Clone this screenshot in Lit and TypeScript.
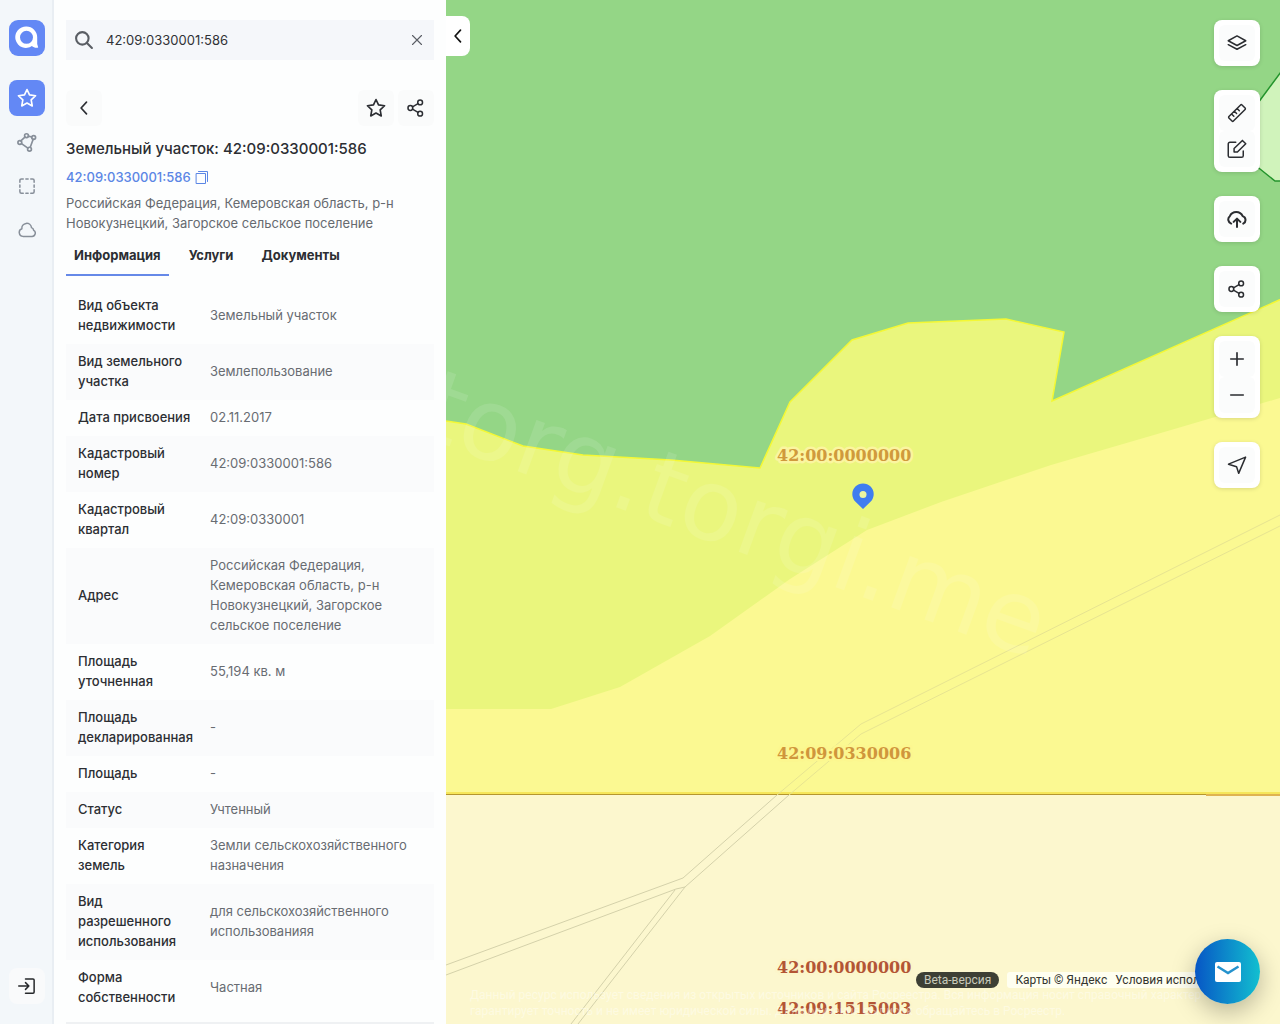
import { LitElement, html, css, svg } from "lit";
import { customElement, state } from "lit/decorators.js";
import { classMap } from "lit/directives/class-map.js";

const icon = (body: unknown, size = 20, box = 24) =>
  html`<svg width=${size} height=${size} viewBox="0 0 ${box} ${box}" fill="none" stroke="currentColor" stroke-width="2" stroke-linecap="round" stroke-linejoin="round" aria-hidden="true">${body}</svg>`;

const star = svg`<path d="M12 1.800l3 6.500 7.300 1-5.300 5 1.300 7.200-6.300-3.500-6.300 3.500 1.300-7.200-5.300-5 7.300-1z"/>`;
const share = svg`<circle cx="17.500" cy="4.500" r="3.200"/><circle cx="4.500" cy="12" r="3.200"/><circle cx="17.500" cy="19.500" r="3.200"/><path d="M7.300 13.600l7.400 4.300M14.700 6.100l-7.400 4.300"/>`;
const chevron = svg`<path d="M15 5L8.500 12l6.500 7"/>`;
const network = svg`<path d="M4.600 10.600l4.900-4.400M13.600 5l4.100 1M19.400 8.800l-3.500 9.600M5.400 13.900l7.700 5.400"/><circle cx="3.400" cy="12.600" r="2.300"/><circle cx="11.400" cy="4.400" r="2.300"/><circle cx="20" cy="6.600" r="2.300"/><circle cx="15" cy="20.600" r="2.300"/>`;
const dashed = svg`<path d="M2.500 7V4.500a2 2 0 0 1 2-2H7M10.500 2.500h3M17 2.500h2.500a2 2 0 0 1 2 2V7M21.500 10.500v3M21.500 17v2.500a2 2 0 0 1-2 2H17M13.500 21.500h-3M7 21.500H4.500a2 2 0 0 1-2-2V17M2.500 13.500v-3"/>`;
const cloud = svg`<path d="M6.500 20.500h12a4.300 4.300 0 0 0 2.400-8 4.500 4.500 0 0 0-2.900-3.700A6.300 6.300 0 0 0 5.200 10.400a5.200 5.200 0 0 0 1.300 10.100z"/>`;
const login = svg`<path d="M10 2.500h10a1.500 1.500 0 0 1 1.500 1.500v16a1.500 1.500 0 0 1-1.500 1.500H10M1 12h13.500M10 7.500l4.500 4.500-4.500 4.500"/>`;
const layers = svg`<path d="M12 3.500L1.500 9.300 12 15l10.500-5.700zM1.500 14L12 19.500 22.500 14" stroke-width="1.800"/>`;
const ruler = svg`<path d="M16.300 2.300a1.200 1.200 0 0 1 1.700 0l3.700 3.700a1.200 1.200 0 0 1 0 1.700L7.700 21.700a1.200 1.200 0 0 1-1.700 0L2.300 18a1.200 1.200 0 0 1 0-1.700zM5.500 13.200l2.700 2.700M8.800 9.900l2.700 2.700M12.100 6.600l2.700 2.700" stroke-width="1.800"/>`;
const edit = svg`<path d="M10.500 4H3.500a2 2 0 0 0-2 2v14a2 2 0 0 0 2 2h14a2 2 0 0 0 2-2v-5.500M8.500 11.500L18.500 1.700l4 4-10 10h-4z" stroke-width="1.800"/>`;
const upload = svg`<path d="M5 17.500A5.200 5.200 0 0 1 3.400 8.600 8.500 8.500 0 0 1 18.800 8.600 4.800 4.800 0 0 1 19.500 17.500M12 21.500v-9.500M8 15.500l4-4 4 4" stroke-width="2.400"/>`;
const plane = svg`<path d="M22.300 2.500L1.800 11l9.700 3L14 22z" stroke-width="1.800"/>`;

const rows: [string, string][] = [
  ["Вид объекта недвижимости", "Земельный участок"],
  ["Вид земельного участка", "Землепользование"],
  ["Дата присвоения", "02.11.2017"],
  ["Кадастровый номер", "42:09:0330001:586"],
  ["Кадастровый квартал", "42:09:0330001"],
  ["Адрес", "Российская Федерация, Кемеровская область, р-н Новокузнецкий, Загорское сельское поселение"],
  ["Площадь уточненная", "55,194 кв. м"],
  ["Площадь декларированная", "-"],
  ["Площадь", "-"],
  ["Статус", "Учтенный"],
  ["Категория земель", "Земли сельскохозяйственного назначения"],
  ["Вид разрешенного использования", "для сельскохозяйственного использованияя"],
  ["Форма собственности", "Частная"],
];

@customElement("nav-rail")
class NavRail extends LitElement {
  static styles = css`
    :host { display: flex; flex-direction: column; align-items: center; box-sizing: border-box; padding: 20px 0; background: #f3f7fa; box-shadow: inset -2px 0 #e9eef3; }
    .logo { display: grid; place-items: center; width: 36px; height: 36px; margin-bottom: 24px; border-radius: 9px; background: #6388f5; }
    nav { display: flex; flex-direction: column; gap: 8px; }
    button { display: grid; place-items: center; width: 36px; height: 36px; padding: 0; border: 0; border-radius: 8px; background: none; color: #878f99; }
    button.active { background: #6388f5; color: #fff; }
    .login { margin-top: auto; background: #f9fafb; color: #26282b; }
  `;
  render() {
    return html`
      <a class="logo" href="#" aria-label="Главная"><svg width="24" height="24" viewBox="0 0 24 24" aria-hidden="true"><path d="M11.500 0.500a10.700 10.700 0 0 1 10.700 10.700V18l1 3.600c-2.200.6-4.500.1-6.300-1.500A10.700 10.700 0 1 1 11.500.5zm0 4.300a6.500 6.500 0 1 0 0 13 6.500 6.500 0 0 0 0-13z" fill="#fff" fill-rule="evenodd"/></svg></a>
      <nav>
        <button class="active" aria-label="Избранное">${icon(star)}</button>
        <button aria-label="Полигоны">${icon(network)}</button>
        <button aria-label="Выделение">${icon(dashed, 18)}</button>
        <button aria-label="Облако">${icon(cloud, 18)}</button>
      </nav>
      <button class="login" aria-label="Войти">${icon(login, 18)}</button>
    `;
  }
}

@customElement("info-panel")
class InfoPanel extends LitElement {
  @state() private tab = 0;
  static styles = css`
    :host { display: flex; flex-direction: column; box-sizing: border-box; padding: 20px 12px 0; background: #fdfefe; color: #2c2e33; overflow: hidden; }
    .search { display: flex; align-items: center; gap: 12px; height: 40px; padding: 0 8px; background: #f5f7fa; color: #5a5e64; flex: none; }
    input { flex: 1; min-width: 0; border: 0; padding: 0; background: none; font: inherit; color: #303236; outline: 0; }
    button { padding: 0; border: 0; background: none; color: inherit; font: inherit; }
    .clear { display: grid; width: 18px; }
    .actions { display: flex; gap: 4px; margin: 30px 0 12px; }
    .square { display: grid; place-items: center; width: 36px; height: 36px; border-radius: 6px; background: #fafbfb; }
    .square:first-child { margin-right: auto; }
    h1 { margin: 0; font-size: 15px; line-height: 22px; font-weight: 500; }
    .number { display: flex; align-items: center; gap: 4px; margin-top: 7px; line-height: 20px; color: #5b86e5; font-weight: 500; }
    a { color: inherit; text-decoration: none; }
    .copy { display: grid; }
    .address { margin: 6px 0 12px; line-height: 20px; color: #666a70; }
    .tabs { display: flex; gap: 12px; margin-bottom: 12px; }
    .tab { padding: 0 8px 9px; line-height: 20px; font-weight: 700; border-bottom: 2px solid transparent; }
    .tab.on { border-color: #6689e8; }
    table { border-collapse: collapse; table-layout: fixed; width: 100%; }
    th, td { box-sizing: border-box; padding: 7px 12px 9px; line-height: 20px; text-align: left; }
    th { width: 132px; padding-right: 4px; font-weight: 500; }
    td { color: #686c72; }
    tr:nth-child(even) { background: #fafbfc; }
    .rule { width: 100%; margin: 6px 0 0; border: 0; border-top: 2px solid #eff1f3; }
  `;
  render() {
    return html`
      <div class="search">
        ${icon(svg`<circle cx="10" cy="10" r="7.500" stroke-width="2.500"/><path d="M15.500 15.500L21.500 21.500" stroke-width="2.500"/>`)}
        <input aria-label="Поиск" .value=${"42:09:0330001:586"} />
        <button class="clear" aria-label="Очистить">${icon(svg`<path d="M6 6l12 12M18 6L6 18" stroke-width="1.500"/>`, 18)}</button>
      </div>
      <div class="actions">
        <button class="square" aria-label="Назад">${icon(chevron)}</button>
        <button class="square" aria-label="В избранное">${icon(star)}</button>
        <button class="square" aria-label="Поделиться">${icon(share, 18)}</button>
      </div>
      <h1>Земельный участок: 42:09:0330001:586</h1>
      <div class="number"><a href="#">42:09:0330001:586</a>
        <button class="copy" aria-label="Скопировать">${icon(svg`<path d="M1.500 4.500h9v10h-9zM3.500 2.500h9v10" stroke-width="1"/>`, 16, 16)}</button>
      </div>
      <p class="address">Российская Федерация, Кемеровская область, р-н Новокузнецкий, Загорское сельское поселение</p>
      <div class="tabs" role="tablist">
        ${["Информация", "Услуги", "Документы"].map((name, i) => html`<button role="tab" aria-selected=${this.tab === i} class=${classMap({ tab: true, on: this.tab === i })} @click=${() => (this.tab = i)}>${name}</button>`)}
      </div>
      <table><tbody>${rows.map(([k, v]) => html`<tr><th scope="row">${k}</th><td>${v}</td></tr>`)}</tbody></table>
      <hr class="rule" />
    `;
  }
}

@customElement("land-map")
class LandMap extends LitElement {
  static styles = css`
    :host { display: block; position: relative; overflow: hidden; }
    .canvas { position: absolute; inset: 0; width: 100%; height: 100%; }
    .mark { font: 100px "DejaVu Sans", sans-serif; fill: #fff; fill-opacity: 0.11; }
    .label { font: 700 16px "DejaVu Serif", serif; stroke-width: 5px; stroke-linejoin: round; paint-order: stroke; }
    .upper { fill: #d09a3c; stroke: #fbf5a0; }
    .middle { fill: #d0963c; stroke: #fcf78f; }
    .lower { fill: #b35535; stroke: #fcf6ca; }
    .note { font: 12px Roboto, "Noto Sans", sans-serif; fill: #fff; fill-opacity: 0.42; }
    .collapse { position: absolute; left: 0; top: 16px; display: grid; place-items: center; width: 24px; height: 40px; padding: 0; border: 0; border-radius: 0 8px 8px 0; background: #fff; color: #111; }
    .tools { position: absolute; right: 20px; top: 20px; display: flex; flex-direction: column; gap: 24px; }
    .group { display: flex; flex-direction: column; padding: 5px; border-radius: 8px; background: #fff; box-shadow: 0 1px 4px #0002; }
    .group button { display: grid; place-items: center; width: 36px; height: 36px; padding: 0; border: 0; border-radius: 6px; background: #fbfcfc; color: #2b2d31; }
    .legal { position: absolute; left: 470px; right: 36px; bottom: 36px; display: flex; gap: 8px; font: 12px Roboto, "Noto Sans", sans-serif; line-height: 16px; white-space: nowrap; }
    .beta { padding: 0 8px; border-radius: 8px; background: #3d3f34; color: #c8cabb; }
    .terms { display: flex; gap: 8px; flex: 1; padding: 0 8px; border-radius: 3px; background: #fffff0; overflow: hidden; }
    .terms a { color: #34352f; text-decoration: none; }
    .mail { position: absolute; right: 20px; bottom: 20px; display: grid; place-items: center; width: 65px; height: 65px; padding: 0; border: 0; border-radius: 50%; background: linear-gradient(90deg, #0756c5, #12bfd0); box-shadow: 0 8px 24px #0004; }
  `;
  render() {
    return html`
      <svg class="canvas" viewBox="446 0 834 1024" preserveAspectRatio="xMinYMin slice" role="img" aria-label="Карта участков">
        <rect x="446" width="834" height="1024" fill="#94d686"/>
        <path d="M1281 72l-26 35v58l20 16h6z" fill="#d0f3bb" stroke="#23942c" stroke-width="1.500"/>
        <path d="M440 420l26 4 57 22 60 9 88 5 89 8 30-66 62-62 56-17 98-4 58 13-12 69 234-104v500H440z" fill="#eaf67d" stroke="#f4f834" stroke-width="1.500"/>
        <path d="M446 709h105l69-22 90-51 80-57 77-49 74-28 110-37 120-35 109-32v397H446z" fill="#fbf992"/>
        <path d="M446 795h834v229H446z" fill="#fcf7ce"/>
        <path d="M446 793.500h834" stroke="#f6e65a" stroke-width="3"/>
        <path d="M446 794.500h834" stroke="#b4962f" stroke-width="1"/>
        <path d="M1206 795h74" stroke="#dfb350" stroke-width="2"/>
        <g fill="none" stroke-width="1">
          <path d="M1280 515L861 724l-84 71M1280 526L861 734l-72 61" stroke="#e7e491"/>
          <path d="M777 795l-94 83-237 87M789 795l-104 92-9 2-230 86M685 887L578 1024M675 890L571 1024" stroke="#d4d1aa"/>
        </g>
        <text class="mark" x="415" y="434" transform="rotate(20 415 434)">torg.torgi.me</text>
        <text class="label upper" x="777" y="461">42:00:0000000</text>
        <text class="label middle" x="777" y="759">42:09:0330006</text>
        <text class="label lower" x="777" y="973">42:00:0000000</text>
        <text class="label lower" x="777" y="1014">42:09:1515003</text>
        <text class="note" x="470" y="999">Данный ресурс использует сведения из открытых источников и сайта Росреестра. Вся информация носит справочный характер</text>
        <text class="note" x="470" y="1015">гарантирует точность и не имеет юридической силы. Для получения выписок обращайтесь в Росреестр.</text>
        <path d="M863 509l-7.500-7.200a10.700 10.700 0 1 1 15 0z" fill="#3f7df0"/><circle cx="863" cy="494.500" r="3.500" fill="#edf6a0"/>
      </svg>
      <button class="collapse" aria-label="Свернуть">${icon(chevron)}</button>
      <div class="tools">
        <div class="group"><button aria-label="Слои">${icon(layers)}</button></div>
        <div class="group"><button aria-label="Линейка">${icon(ruler)}</button><button aria-label="Рисовать">${icon(edit)}</button></div>
        <div class="group"><button aria-label="Загрузить">${icon(upload)}</button></div>
        <div class="group"><button aria-label="Поделиться">${icon(share, 18)}</button></div>
        <div class="group"><button aria-label="Приблизить">${icon(svg`<path d="M12 4.500v15M4.500 12h15"/>`)}</button><button aria-label="Отдалить">${icon(svg`<path d="M4.500 12h15"/>`)}</button></div>
        <div class="group"><button aria-label="Моё местоположение">${icon(plane)}</button></div>
      </div>
      <div class="legal"><span class="beta">Beta-версия</span><span class="terms"><a href="#">Карты © Яндекс</a><a href="#">Условия использования</a></span></div>
      <button class="mail" aria-label="Написать"><svg width="26" height="20" viewBox="0 0 26 20" aria-hidden="true"><rect width="26" height="20" rx="2" fill="#fff"/><path d="M2.500 4.500L13 11l10.500-6.500" fill="none" stroke="#2592cd" stroke-width="2.500"/></svg></button>
    `;
  }
}

@customElement("app-root")
class AppRoot extends LitElement {
  static styles = css`
    :host { display: grid; grid-template-columns: 54px 392px minmax(0, 1fr); height: 100vh; overflow: hidden; font: 13px Inter, "Noto Sans", sans-serif; }
  `;
  render() {
    return html`<nav-rail></nav-rail><info-panel></info-panel><land-map></land-map>`;
  }
}
